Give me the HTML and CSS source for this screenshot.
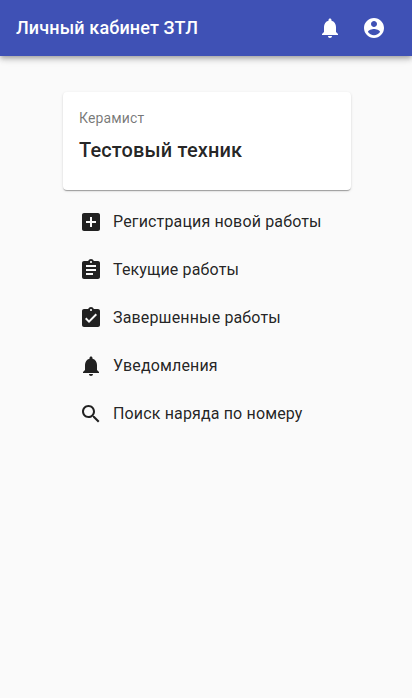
FILE: index.html
```html
<!DOCTYPE html>
<html lang="ru">
<head>
  <meta charset="UTF-8" />
  <meta name="viewport" content="width=device-width, initial-scale=1.0" />
  <title>Личный кабинет ЗТЛ</title>
  <link rel="stylesheet" href="styles.css">
</head>
<body>
  <header class="app-bar">
    <h1 class="app-title">Личный кабинет ЗТЛ</h1>
    <button class="icon-btn" aria-label="Уведомления">
      <svg viewBox="0 0 24 24"><path d="M12 22c1.1 0 2-.9 2-2h-4c0 1.1.89 2 2 2zm6-6v-5c0-3.07-1.64-5.64-4.5-6.32V4c0-.83-.67-1.5-1.5-1.5s-1.5.67-1.5 1.5v.68C7.63 5.36 6 7.92 6 11v5l-2 2v1h16v-1l-2-2z"/></svg>
    </button>
    <button class="icon-btn" aria-label="Профиль">
      <svg viewBox="0 0 24 24"><path d="M12 2C6.48 2 2 6.48 2 12s4.48 10 10 10 10-4.48 10-10S17.52 2 12 2zm0 3c1.66 0 3 1.34 3 3s-1.34 3-3 3-3-1.34-3-3 1.34-3 3-3zm0 14.2c-2.5 0-4.71-1.28-6-3.22.03-1.99 4-3.08 6-3.08 1.99 0 5.97 1.09 6 3.08-1.29 1.94-3.5 3.22-6 3.22z"/></svg>
    </button>
  </header>

  <main class="content">
    <section class="card">
      <p class="card-role">Керамист</p>
      <h2 class="card-name">Тестовый техник</h2>
    </section>

    <nav class="menu">
      <a class="menu-item">
        <svg viewBox="0 0 24 24"><path d="M19 3H5c-1.11 0-2 .9-2 2v14c0 1.1.89 2 2 2h14c1.1 0 2-.9 2-2V5c0-1.1-.9-2-2-2zm-2 10h-4v4h-2v-4H7v-2h4V7h2v4h4v2z"/></svg>
        <span>Регистрация новой работы</span>
      </a>
      <a class="menu-item">
        <svg viewBox="0 0 24 24"><path d="M19 3h-4.18C14.4 1.84 13.3 1 12 1c-1.3 0-2.4.84-2.82 2H5c-1.1 0-2 .9-2 2v14c0 1.1.9 2 2 2h14c1.1 0 2-.9 2-2V5c0-1.1-.9-2-2-2zm-7 0c.55 0 1 .45 1 1s-.45 1-1 1-1-.45-1-1 .45-1 1-1zm2 14H7v-2h7v2zm3-4H7v-2h10v2zm0-4H7V7h10v2z"/></svg>
        <span>Текущие работы</span>
      </a>
      <a class="menu-item">
        <svg viewBox="0 0 24 24"><path d="M19 3h-4.18C14.4 1.84 13.3 1 12 1c-1.3 0-2.4.84-2.82 2H5c-1.1 0-2 .9-2 2v14c0 1.1.9 2 2 2h14c1.1 0 2-.9 2-2V5c0-1.1-.9-2-2-2zm-7 0c.55 0 1 .45 1 1s-.45 1-1 1-1-.45-1-1 .45-1 1-1zm-2 14l-4-4 1.41-1.41L10 14.17l6.59-6.59L18 9l-8 8z"/></svg>
        <span>Завершенные работы</span>
      </a>
      <a class="menu-item">
        <svg viewBox="0 0 24 24"><path d="M12 22c1.1 0 2-.9 2-2h-4c0 1.1.89 2 2 2zm6-6v-5c0-3.07-1.64-5.64-4.5-6.32V4c0-.83-.67-1.5-1.5-1.5s-1.5.67-1.5 1.5v.68C7.63 5.36 6 7.92 6 11v5l-2 2v1h16v-1l-2-2z"/></svg>
        <span>Уведомления</span>
      </a>
      <a class="menu-item">
        <svg viewBox="0 0 24 24"><path d="M15.5 14h-.79l-.28-.27C15.41 12.59 16 11.11 16 9.5 16 5.91 13.09 3 9.5 3S3 5.91 3 9.5 5.91 16 9.5 16c1.61 0 3.09-.59 4.23-1.57l.27.28v.79l5 4.99L20.49 19l-4.99-5zm-6 0C7.01 14 5 11.99 5 9.5S7.01 5 9.5 5 14 7.01 14 9.5 11.99 14 9.5 14z"/></svg>
        <span>Поиск наряда по номеру</span>
      </a>
    </nav>
  </main>
</body>
</html>
```

FILE: styles.css
```css
* { box-sizing: border-box; }
html, body { height: 100%; }
body { margin: 0; background: #fafafa; color: rgba(0, 0, 0, 0.87); font-family: Roboto, "Liberation Sans", sans-serif; }

.app-bar { display: flex; align-items: center; height: 56px; padding: 0 26px 0 16px; background: #3f51b5; color: #fff; box-shadow: 0 2px 4px -1px rgba(0,0,0,.2), 0 4px 5px 0 rgba(0,0,0,.14), 0 1px 10px 0 rgba(0,0,0,.12); }
.app-title { flex: 1; margin: 0; font-size: 18px; font-weight: 500; line-height: 1.6; letter-spacing: 0.0075em; }
.icon-btn { display: flex; width: 24px; height: 24px; margin-left: 20px; padding: 0; border: 0; background: none; color: inherit; }
.icon-btn svg { width: 24px; height: 24px; fill: currentColor; }

.content { width: 288px; margin: 0 0 0 63px; padding-top: 36px; }

.card { height: 98px; padding: 16px; background: #fff; border-radius: 4px; box-shadow: 0 2px 1px -1px rgba(0,0,0,.2), 0 1px 1px 0 rgba(0,0,0,.14), 0 1px 3px 0 rgba(0,0,0,.12); }
.card-role { margin: 0 0 8px; font-size: 14px; line-height: 20px; letter-spacing: 0.01071em; color: rgba(0, 0, 0, 0.54); }
.card-name { margin: 0; font-size: 20px; font-weight: 500; line-height: 28px; letter-spacing: 0.0075em; }

.menu { display: flex; flex-direction: column; padding-top: 8px; }
.menu-item { display: flex; align-items: center; height: 48px; padding-left: 16px; font-size: 16px; letter-spacing: 0.00938em; }
.menu-item svg { flex: none; width: 24px; height: 24px; margin-right: 10px; fill: currentColor; }
.menu-item span { padding-bottom: 2px; }
```
